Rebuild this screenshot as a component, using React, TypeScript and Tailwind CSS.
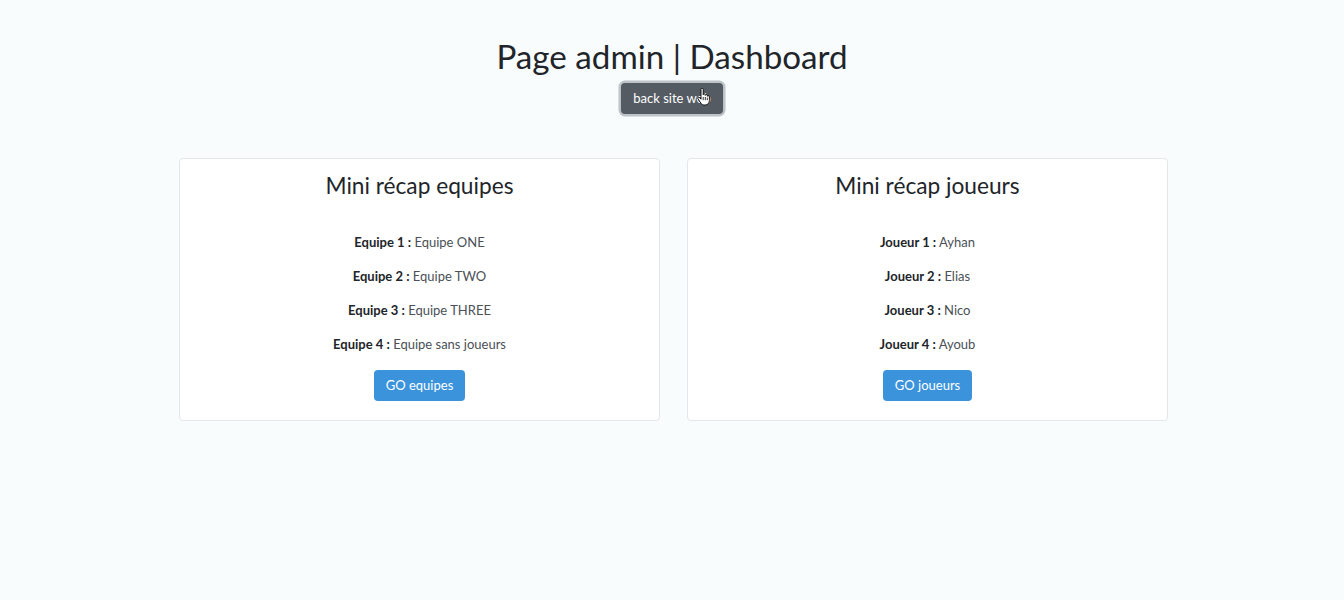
const equipes = [
  { label: "Equipe 1", value: "Equipe ONE" },
  { label: "Equipe 2", value: "Equipe TWO" },
  { label: "Equipe 3", value: "Equipe THREE" },
  { label: "Equipe 4", value: "Equipe sans joueurs" },
];

const joueurs = [
  { label: "Joueur 1", value: "Ayhan" },
  { label: "Joueur 2", value: "Elias" },
  { label: "Joueur 3", value: "Nico" },
  { label: "Joueur 4", value: "Ayoub" },
];

const HandCursor = () => (
  <svg
    className="absolute left-[76px] top-[5px]"
    width="14"
    height="18"
    viewBox="0 0 14 18"
  >
    <path
      d="M4 1.5c0-.8.6-1.2 1.1-1.2s1.1.4 1.1 1.2v5.2c.2-.6.6-.9 1.1-.9s1 .4 1 1v.6c.2-.5.6-.8 1.1-.8s1 .4 1 1v.7c.2-.4.6-.6 1-.6.6 0 1 .5 1 1.1v3.6c0 2.6-1.6 4.6-4.2 4.6H7.1c-1.4 0-2.4-.7-3.2-1.8L1 10.8c-.4-.6-.3-1.2.2-1.5.5-.3 1.1-.1 1.5.4L4 11.2V1.5z"
      fill="#fff"
      stroke="#000"
      strokeWidth="0.9"
    />
    <path d="M6.2 9v3.2M8.3 9v3.2M10.3 9.6v2.6" stroke="#000" strokeWidth="0.8" />
  </svg>
);

const RecapCard = ({
  title,
  rows,
  cta,
}: {
  title: string;
  rows: { label: string; value: string }[];
  cta: string;
}) => (
  <div className="flex w-[481px] flex-col items-center rounded-[4px] border border-[#e4e7e9] bg-white px-5 pb-[19px] pt-[12px]">
    <h3 className="text-[22.7px] leading-[30px] text-[#212529]">{title}</h3>
    <div className="mt-[31px] flex flex-col items-center gap-[14px]">
      {rows.map((r) => (
        <p key={r.label} className="text-[13px] leading-[20px] text-[#4a5056]">
          <span className="font-bold text-[#212529]">{r.label} :</span> {r.value}
        </p>
      ))}
    </div>
    <button className="mt-[16px] h-[31px] rounded-[4px] bg-[#3a93db] px-3 text-[13px] text-white">
      {cta}
    </button>
  </div>
);

export default function App() {
  return (
    <div className="min-h-[600px] bg-[#f8fcfd] font-['Lato',sans-serif] text-[#212529]">
      <div className="flex flex-col items-center pt-[36px]">
        <h1 className="text-[33.2px] leading-[40px] text-[#212529]">Page admin | Dashboard</h1>
        <div className="relative mt-[7px]">
          <button className="h-[31px] rounded-[4px] bg-[#545b62] px-[12px] text-[13px] text-white shadow-[0_0_0_2.5px_rgba(130,138,145,0.5)]">
            back site web
          </button>
          <HandCursor />
        </div>
      </div>
      <div className="mt-[44px] flex justify-center gap-[27px] pl-[3px]">
        <RecapCard title="Mini récap equipes" rows={equipes} cta="GO equipes" />
        <RecapCard title="Mini récap joueurs" rows={joueurs} cta="GO joueurs" />
      </div>
    </div>
  );
}
